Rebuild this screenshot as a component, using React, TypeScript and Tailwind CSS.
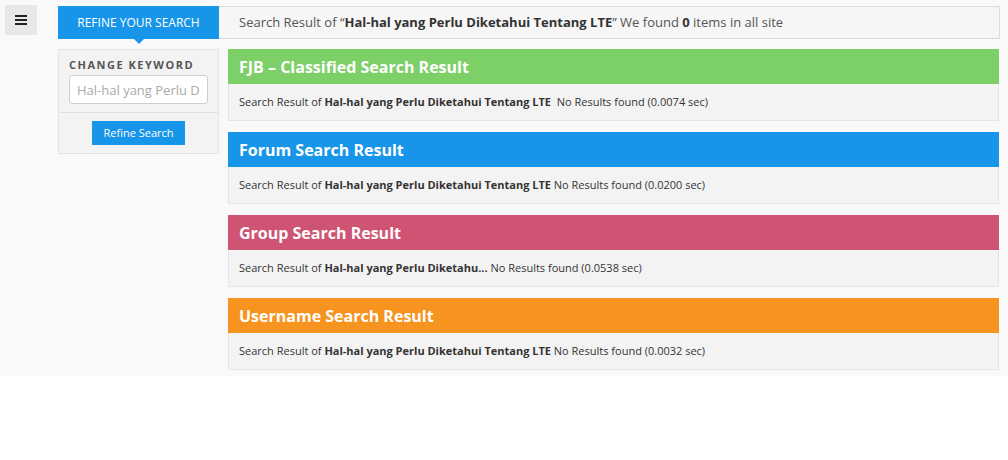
import React from 'react';

const keyword = 'Hal-hal yang Perlu Diketahui Tentang LTE';

const sections = [
  { title: 'FJB – Classified Search Result', bg: 'bg-[#7dd068]', term: keyword, time: '0.0074', pad: true },
  { title: 'Forum Search Result', bg: 'bg-[#1795e9]', term: keyword, time: '0.0200', pad: false },
  { title: 'Group Search Result', bg: 'bg-[#cf5373]', term: 'Hal-hal yang Perlu Diketahu...', time: '0.0538', pad: false },
  { title: 'Username Search Result', bg: 'bg-[#f7941f]', term: keyword, time: '0.0032', pad: false },
];

export default function App() {
  return (
    <div className="w-[1008px] h-[460px] bg-white font-['Open_Sans',sans-serif] text-[#333]">
      <div className="h-[376px] bg-[#f9f9f9] flex">
        <div className="w-[58px] pl-[5px] pt-[5px]">
          <button className="w-[32px] h-[30px] bg-[#e8e8e8] flex items-center justify-center">
            <svg width="12" height="10" viewBox="0 0 12 10">
              <rect x="0" y="0" width="12" height="2" fill="#222" />
              <rect x="0" y="4" width="12" height="2" fill="#222" />
              <rect x="0" y="8" width="12" height="2" fill="#222" />
            </svg>
          </button>
        </div>
        <div className="w-[942px] pt-[6px] flex flex-col">
          <div className="h-[33px] flex border border-[#dcdcdc] bg-[#f6f6f6]">
            <div className="relative w-[161px] -ml-px -mt-px h-[33px] bg-[#1795e9] text-white text-[12px] flex items-center justify-center">
              REFINE YOUR SEARCH
              <span className="absolute left-1/2 -translate-x-1/2 top-full w-0 h-0 border-l-[5px] border-r-[5px] border-t-[5px] border-l-transparent border-r-transparent border-t-[#1795e9]" />
            </div>
            <div className="pl-[20px] flex items-center text-[13px] text-[#555]">
              <span>
                Search Result of “<b className="text-[#333]">{keyword}</b>” We found <b className="text-[#333]">0</b> items in all site
              </span>
            </div>
          </div>
          <div className="flex gap-[9px] mt-[10px]">
            <div className="w-[161px] h-[105px] shrink-0 bg-[#f3f3f3] border border-[#e4e4e4] flex flex-col">
              <div className="px-[10px] pt-[8px] pb-[8px] border-b border-[#e0e0e0]">
                <div className="text-[11px] font-bold tracking-[1.5px] text-[#555] leading-[14px]">CHANGE KEYWORD</div>
                <input
                  className="mt-[3px] w-[139px] h-[29px] bg-white border border-[#cfcfcf] rounded-[3px] px-[7px] text-[13px] text-[#999] placeholder-[#aaa] outline-none"
                  placeholder="Hal-hal yang Perlu Diketahui Tentang LTE"
                />
              </div>
              <div className="flex-1 flex items-center justify-center">
                <button className="w-[93px] h-[24px] bg-[#1795e9] text-white text-[11px]">Refine Search</button>
              </div>
            </div>
            <div className="w-[771px] flex flex-col gap-[11px]">
              {sections.map((s) => (
                <div key={s.title}>
                  <div className={`${s.bg} h-[35px] px-[11px] flex items-center text-white text-[16px] font-bold`}>
                    {s.title}
                  </div>
                  <div className="h-[37px] bg-[#f3f3f3] border border-t-0 border-[#e6e6e6] px-[10px] flex items-center text-[11px] text-[#333]">
                    <span>
                      Search Result of <b>{s.term}</b>
                      {s.pad ? '\u00a0 ' : ' '}No Results found ({s.time} sec)
                    </span>
                  </div>
                </div>
              ))}
            </div>
          </div>
        </div>
      </div>
    </div>
  );
}
